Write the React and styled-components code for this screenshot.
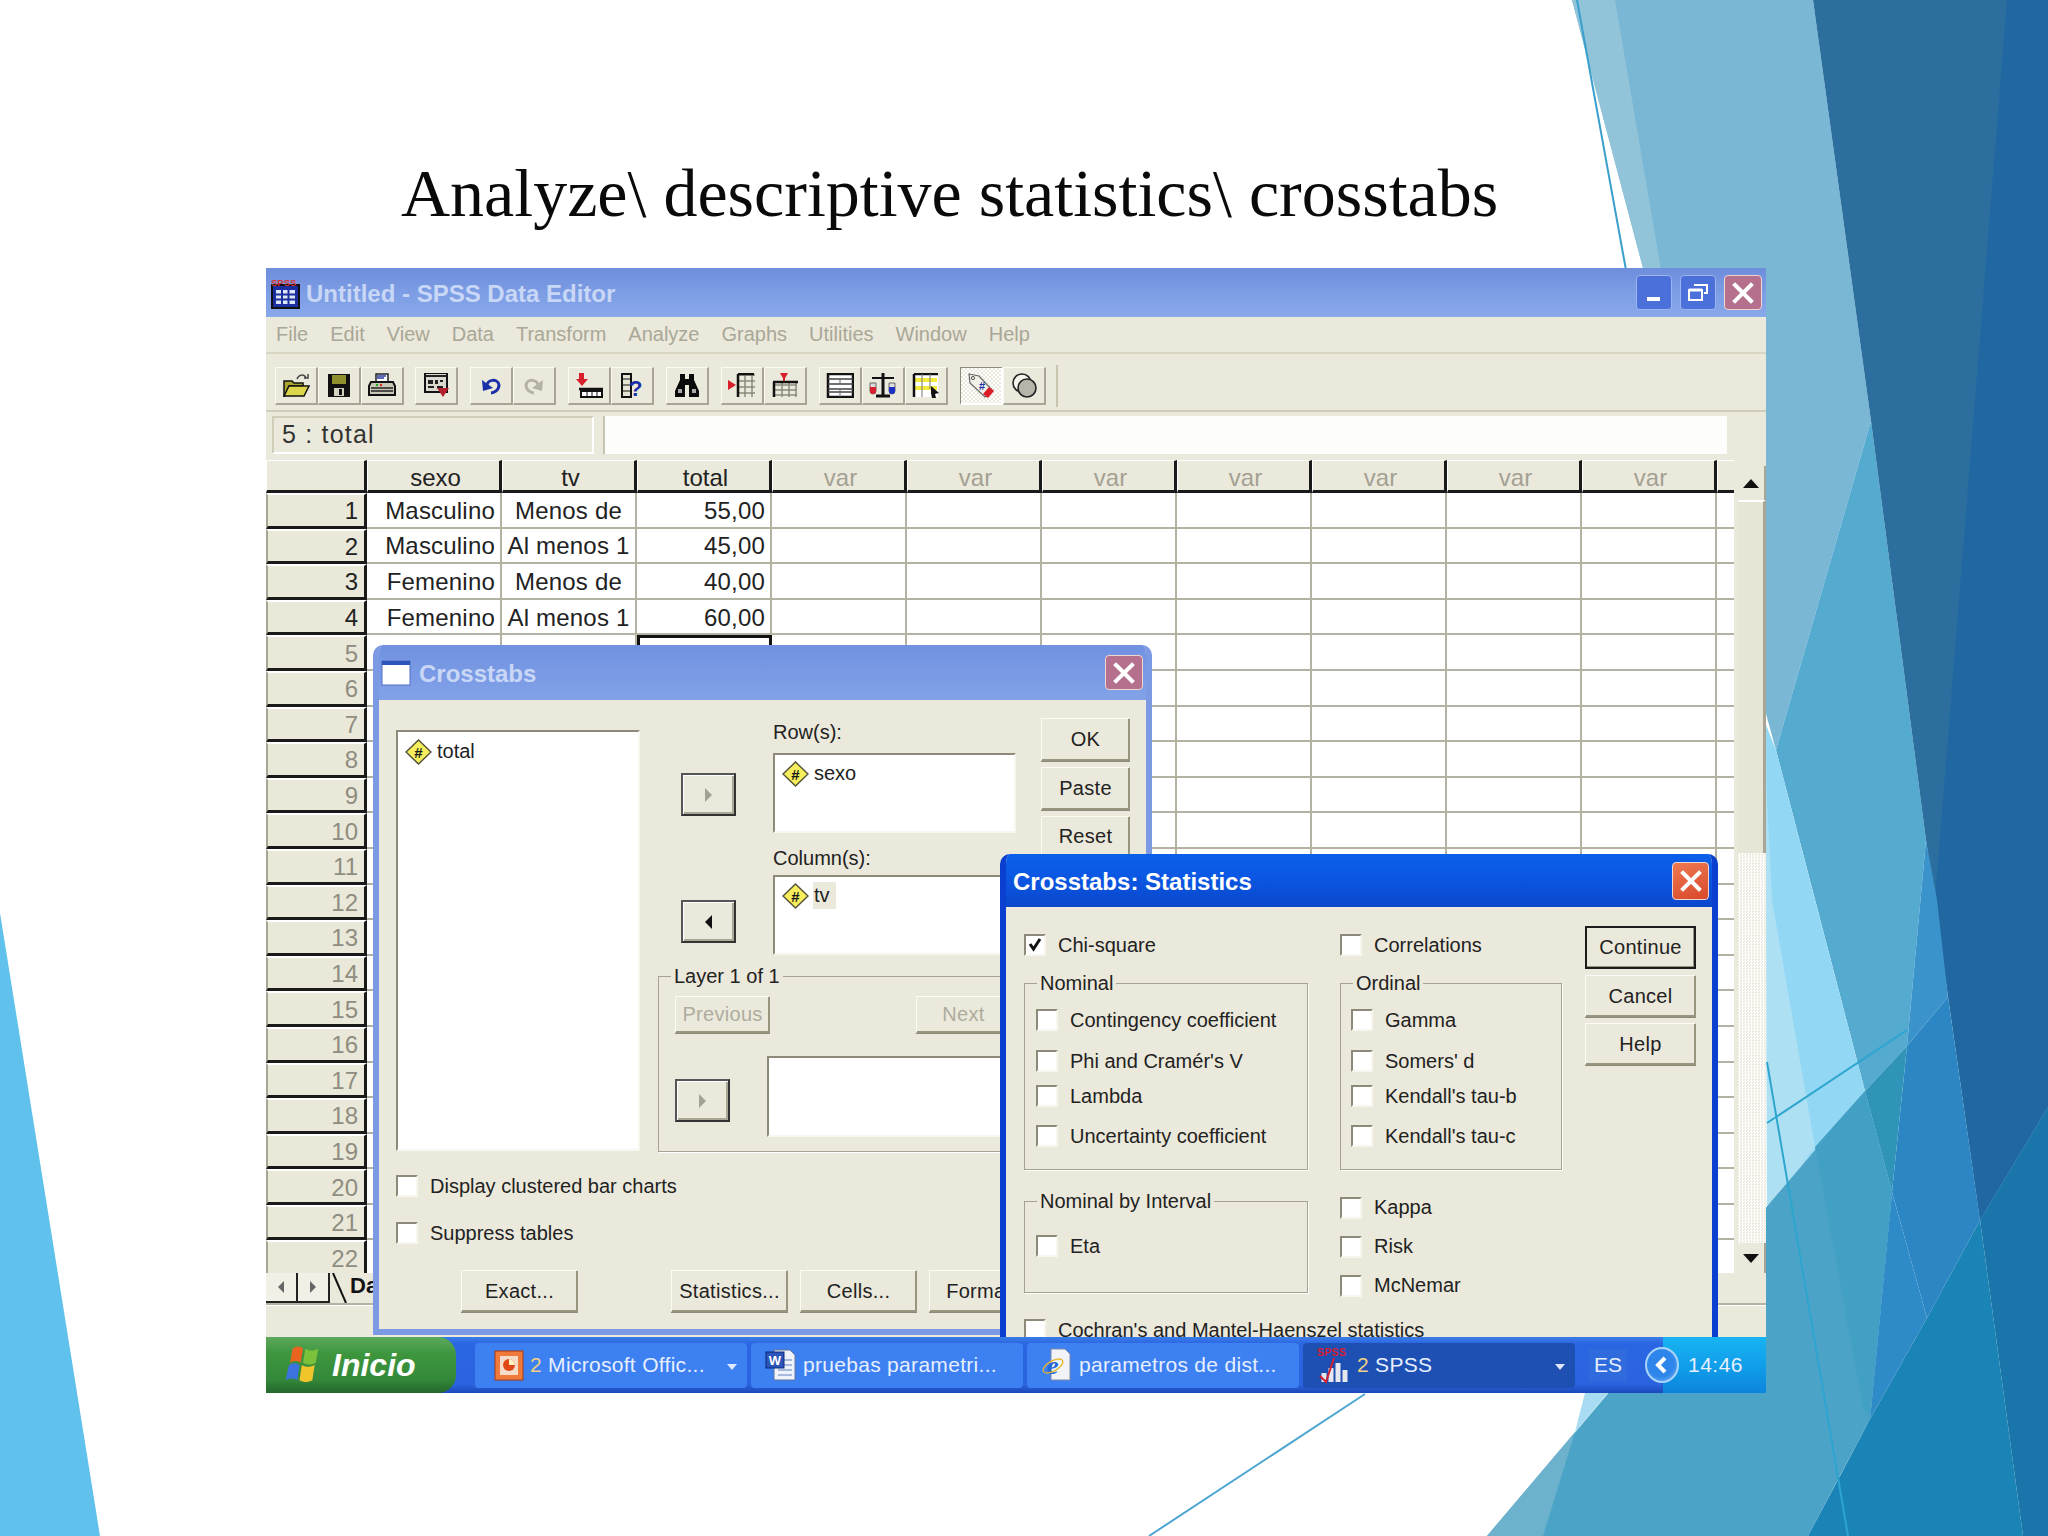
import React from "react";
import styled, { createGlobalStyle } from "styled-components";

const GlobalStyle = createGlobalStyle`
  html, body { margin: 0; padding: 0; background: #fff; }
  * { box-sizing: border-box; }
`;

const FACE = "#ebe9db";
const SHADE = "#98957f";

const Page = styled.div`
  position: relative;
  width: 2048px;
  height: 1536px;
  overflow: hidden;
  background: #fff;
  font-family: "Liberation Sans", Arial, sans-serif;
`;

const Backdrop = styled.svg`
  position: absolute;
  inset: 0;
`;

const Slide = styled.div`
  position: relative;
  display: flex;
  flex-direction: column;
`;

const Heading = styled.h1`
  flex: 0 0 268px;
  margin: 0;
  padding: 155px 0 0 401px;
  font: 400 68px/76px "Liberation Serif", "Times New Roman", serif;
  color: #0a0a0a;
  white-space: nowrap;
`;

const AppWindow = styled.div`
  position: relative;
  display: flex;
  flex-direction: column;
  margin-left: 266px;
  width: 1500px;
  height: 1125px;
  background: ${FACE};
`;

const TitleBar = styled.div`
  flex: 0 0 49px;
  display: flex;
  align-items: center;
  padding: 0 4px;
  background: linear-gradient(180deg, #6e8edc 0%, #7f9fe6 60%, #8aa9ea 100%);
  color: #c9d7f6;
  font-size: 24px;
  font-weight: 700;
`;

const TitleText = styled.span`
  margin-left: ${(p) => p.$left ?? 5}px;
  padding-top: 2px;
  flex: 1;
`;

const WinButtons = styled.div`
  display: flex;
  gap: 8px;
`;

const WinButton = styled.div`
  display: flex;
  align-items: center;
  justify-content: center;
  width: ${(p) => p.$w || 36}px;
  height: ${(p) => p.$h || 35}px;
  border: 1px solid ${(p) => (p.$red ? "#f1d6d0" : "#9db4ee")};
  border-radius: 4px;
  background: ${(p) => p.$bg};
`;

const MenuBar = styled.div`
  flex: 0 0 35px;
  display: flex;
  align-items: center;
  gap: 22px;
  padding: 0 0 0 10px;
  font-size: 20px;
  color: #a9a797;
`;

const ToolBar = styled.div`
  flex: 0 0 60px;
  display: flex;
  align-items: flex-start;
  padding: 13px 0 0 9px;
  border-top: 2px solid #d9d6c4;
  border-bottom: 2px solid #cfccb9;
`;

const ToolGroup = styled.div`
  display: flex;
  margin-right: ${(p) => p.$gap || 12}px;
`;

const ToolButton = styled.div`
  display: flex;
  align-items: center;
  justify-content: center;
  width: 43px;
  height: 38px;
  border: 1px solid;
  border-color: #fbfaf3 #a8a594 #a8a594 #fbfaf3;
  border-width: 1px 2px 2px 1px;
  background: ${(p) =>
    p.$on
      ? "repeating-conic-gradient(#fff 0 25%, #ebe9db 0 50%) 0 0 / 4px 4px"
      : FACE};
  ${(p) => p.$on && "border-color: #8d8a7a #fff #fff #8d8a7a;"}
`;

const ToolEnd = styled.div`
  width: 2px;
  height: 42px;
  margin-top: -2px;
  background: #c7c4b0;
`;

const RefBar = styled.div`
  flex: 0 0 48px;
  display: flex;
  padding: 4px 0 0 6px;
`;

const RefBox = styled.div`
  width: 322px;
  height: 38px;
  padding-left: 8px;
  border: 2px solid;
  border-color: #d0cdb9 #fff #fff #d0cdb9;
  font-size: 25px;
  letter-spacing: 1.2px;
  line-height: 33px;
  color: #333;
`;

const RefInput = styled.div`
  width: 1124px;
  height: 38px;
  margin-left: 9px;
  background: #fdfdfb;
  border-left: 2px solid #c7c4b0;
`;

const SheetArea = styled.div`
  flex: 0 0 813px;
  display: flex;
`;

const SheetGrid = styled.div`
  width: 1468px;
  height: 813px;
  overflow: hidden;
  display: grid;
  grid-template-columns: 101px repeat(10, 135px) 17px;
  grid-template-rows: 33px;
  grid-auto-rows: 35.6px;
  background: #fff;
`;

const HeadCell = styled.div`
  display: flex;
  align-items: center;
  justify-content: center;
  padding: 5px 0 0 4px;
  border-top: 1px solid #fff;
  border-left: 1px solid #fff;
  border-right: ${(p) => (p.$plain ? "0" : "3px solid #1a1a1a")};
  border-bottom: 3px solid #1a1a1a;
  background: ${FACE};
  font-size: 24px;
  line-height: 1;
  color: ${(p) => (p.$muted ? "#a3a193" : "#222")};
`;

const RowHead = styled.div`
  display: flex;
  align-items: center;
  justify-content: flex-end;
  padding: 2px 6px 0 0;
  border-top: 2px solid #fff;
  border-left: 2px solid #a8a594;
  border-right: 3px solid #1a1a1a;
  border-bottom: 3px solid #1a1a1a;
  background: #e9e8d9;
  font-size: 24px;
  color: ${(p) => (p.$muted ? "#8f8d7f" : "#222")};
`;

const Cell = styled.div`
  display: flex;
  align-items: center;
  justify-content: ${(p) => p.$align || "flex-end"};
  padding: 2px ${(p) => (p.$align === "center" ? 0 : 5)}px 0 0;
  border-right: ${(p) => (p.$plain ? "0" : "2px solid #b4b2a2")};
  border-bottom: 2px solid #b4b2a2;
  background: #fff;
  font-size: 24px;
  letter-spacing: 0.2px;
  color: #222;
  ${(p) => p.$current && "outline: 3px solid #111; outline-offset: -3px;"}
`;

const ScrollBar = styled.div`
  width: 28px;
  margin: 6px 0 0 4px;
  display: flex;
  flex-direction: column;
`;

const ScrollEnd = styled.div`
  flex: 0 0 ${(p) => p.$h}px;
  display: flex;
  align-items: center;
  justify-content: center;
  border-right: 2px solid #a8a594;
  background: ${FACE};
`;

const ScrollThumb = styled.div`
  flex: 0 0 353px;
  background: #e7e6d6;
  border-top: 2px solid #fff;
  border-right: 3px solid #a8a594;
`;

const ScrollTrack = styled.div`
  flex: 1;
  background: repeating-conic-gradient(#fff 0 25%, #ebe9db 0 50%) 0 0 / 3px 3px;
`;

const TabStrip = styled.div`
  flex: 0 0 31px;
  display: flex;
  border-bottom: 2px solid #b4b2a2;
  box-shadow: 0 1px 0 #fff;
`;

const TabNav = styled.div`
  display: flex;
  align-items: center;
  justify-content: center;
  width: 32px;
  border-right: 2px solid #222;
  border-bottom: 2px solid #222;
  background: #f1f0e6;
`;

const SheetTab = styled.div`
  display: flex;
  align-items: flex-start;
  gap: 2px;
  padding-left: 2px;
  font-size: 22px;
  font-weight: 700;
  line-height: 26px;
  color: #111;
`;

const TaskBar = styled.div`
  position: absolute;
  left: 0;
  right: 0;
  bottom: 0;
  height: 56px;
  display: flex;
  align-items: center;
  background: linear-gradient(180deg, #3a7de6 0%, #2b66e2 12%, #2a63de 85%, #1c48b8 100%);
  font-size: 21px;
  color: #e7efff;
`;

const StartButton = styled.div`
  flex: 0 0 190px;
  height: 56px;
  display: flex;
  align-items: center;
  gap: 8px;
  padding-left: 16px;
  border-radius: 0 18px 18px 0;
  background: linear-gradient(180deg, #5da85d 0%, #3d963d 30%, #34893a 75%, #24682c 100%);
  font-size: 32px;
  font-weight: 700;
  font-style: italic;
  color: #fff;
`;

const Task = styled.div`
  flex: 0 0 272px;
  height: 45px;
  margin-left: ${(p) => p.$gap}px;
  display: flex;
  align-items: center;
  gap: 6px;
  padding-left: ${(p) => p.$pad || 14}px;
  border-radius: 4px;
  background: ${(p) => (p.$active ? "#1e50b4" : "#3c80f2")};
  letter-spacing: 0.3px;
  white-space: nowrap;
`;

const TaskCount = styled.span`
  color: #f2d184;
`;

const Caret = styled.span`
  margin: 4px 10px 0 auto;
  width: 0;
  height: 0;
  border: 5px solid transparent;
  border-top: 6px solid #dfe8ff;
  border-bottom: 0;
`;

const Lang = styled.div`
  margin-left: 14px;
  padding: 4px 5px;
  background: #2f6bdc;
`;

const Tray = styled.div`
  position: relative;
  margin-left: auto;
  flex: 0 0 103px;
  height: 56px;
  padding: 15px 0 0 25px;
  background: linear-gradient(180deg, #18b4f2 0%, #0f9ae8 60%, #0d84dc 100%);
  letter-spacing: 0.5px;
  line-height: 26px;
`;

const TrayChevron = styled.div`
  position: absolute;
  left: -18px;
  top: 10px;
  width: 34px;
  height: 36px;
  display: flex;
  align-items: center;
  justify-content: center;
  border-radius: 50%;
  border: 2px solid #a8d4fa;
  background: radial-gradient(circle at 45% 45%, #2f86ea 0 55%, #7fbcf6 100%);
`;

const Dialog = styled.div`
  position: absolute;
  left: ${(p) => p.$left}px;
  top: ${(p) => p.$top}px;
  width: ${(p) => p.$w}px;
  height: ${(p) => p.$h}px;
  display: flex;
  flex-direction: column;
  overflow: hidden;
  border: 6px solid ${(p) => (p.$active ? "#0b3fd0" : "#7c9ae4")};
  border-top: 0;
  ${(p) => p.$active && "border-bottom: 0;"}
  border-radius: 10px 10px 0 0;
  background: ${FACE};
  font-size: 20px;
  color: #222;
`;

const DialogTitle = styled.div`
  flex: 0 0 ${(p) => p.$h}px;
  margin: 0 -6px;
  display: flex;
  align-items: center;
  padding: 0 ${(p) => p.$pad}px 0 ${(p) => p.$padL}px;
  font-size: 24px;
  font-weight: 700;
  color: ${(p) => (p.$active ? "#fff" : "#c9d7f6")};
  background: ${(p) =>
    p.$active
      ? "linear-gradient(180deg, #0a5fe8 0%, #0b58e4 40%, #0a47cc 100%)"
      : "linear-gradient(180deg, #7091e0 0%, #82a2e8 100%)"};
`;

const DialogBody = styled.div`
  flex: 1;
  min-height: 0;
  display: flex;
  flex-direction: column;
  padding: 18px 0 0 17px;
`;

const StatsBody = styled.div`
  flex: 1;
  min-height: 0;
  display: grid;
  grid-template-columns: 284px 222px 111px;
  column-gap: 32px;
  align-items: start;
  padding: 18px 0 0 18px;
`;

const Column = styled.div`
  display: flex;
  flex-direction: column;
`;

const TopArea = styled.div`
  flex: 0 0 434px;
  display: flex;
`;

const sunken = `
  background: #fff;
  border: 2px solid;
  border-color: #8d8a7a #f7f6ef #f7f6ef #8d8a7a;
`;

const VarList = styled.div`
  ${sunken}
  width: 244px;
  height: 421px;
  margin-top: 12px;
  padding: 6px 0 0 7px;
`;

const VarItem = styled.div`
  display: flex;
  align-items: center;
  gap: 4px;
`;

const VarName = styled.span`
  padding: 2px 6px 2px 1px;
  background: ${(p) => (p.$picked ? "#ebe9db" : "transparent")};
`;

const MiddleColumn = styled.div`
  width: 365px;
  margin-left: 18px;
  display: flex;
  flex-direction: column;
`;

const PickRow = styled.div`
  display: flex;
  margin-top: ${(p) => p.$top || 0}px;
`;

const ArrowButton = styled.div`
  flex: 0 0 55px;
  height: 43px;
  margin: ${(p) => p.$top}px 0 0 ${(p) => p.$left}px;
  display: flex;
  align-items: center;
  justify-content: center;
  border: 2px solid #333;
  border-color: #555 #333 #333 #555;
  box-shadow: inset 1px 1px 0 #fff, inset -2px -2px 0 #aaa795;
  background: ${FACE};
`;

const PickColumn = styled.div`
  margin-left: 37px;
  width: 243px;
  display: flex;
  flex-direction: column;
`;

const PickLabel = styled.div`
  height: ${(p) => p.$h}px;
  display: flex;
  align-items: flex-end;
  padding-bottom: ${(p) => p.$under}px;
  line-height: 24px;
`;

const PickBox = styled.div`
  ${sunken}
  height: 80px;
  padding: 5px 0 0 7px;
`;

const Group = styled.fieldset`
  margin: ${(p) => p.$top || 0}px 0 0;
  height: ${(p) => p.$h}px;
  padding: 0;
  border: 1px solid #a5a292;
  box-shadow: 1px 1px 0 #fff;
  min-width: 0;
`;

const GroupTitle = styled.legend`
  margin-left: 12px;
  padding: 0 3px;
  line-height: 24px;
  font-size: 20px;
`;

const GroupContent = styled.div`
  padding: ${(p) => p.$top}px 0 0 ${(p) => p.$left}px;
`;

const LayerRow = styled.div`
  display: flex;
  justify-content: ${(p) => p.$justify || "flex-start"};
  margin-top: ${(p) => p.$top || 0}px;
  padding-right: ${(p) => p.$right || 0}px;
`;

const LayerBox = styled.div`
  ${sunken}
  width: 245px;
  height: 81px;
  margin-left: 37px;
`;

const Button = styled.div`
  display: flex;
  align-items: center;
  justify-content: center;
  flex: 0 0 auto;
  width: ${(p) => p.$w}px;
  height: ${(p) => p.$h}px;
  background: ${FACE};
  border: 1px solid;
  border-color: #fbfaf3 ${SHADE} ${SHADE} #fbfaf3;
  box-shadow: inset -1px -1px 0 ${SHADE}, 0 1px 0 #8d8a7a;
  letter-spacing: 0.3px;
  color: ${(p) => (p.$off ? "#aeac9e" : "#222")};
  ${(p) =>
    p.$default &&
    "border: 2px solid #1c1c1c; box-shadow: inset -1px -1px 0 #98957f;"}
`;

const SideButtons = styled.div`
  width: 89px;
  margin-left: 18px;
  display: flex;
  flex-direction: column;
  gap: 6px;
`;

const StatsButtons = styled.div`
  display: flex;
  flex-direction: column;
  margin-top: 1px;
  margin-left: -9px;
  gap: 6px;
`;

const CheckRow = styled.div`
  display: flex;
  align-items: center;
  gap: 12px;
  height: ${(p) => p.$h || 40}px;
  margin-top: ${(p) => p.$top || 0}px;
  white-space: nowrap;
`;

const CheckBox = styled.div`
  flex: 0 0 22px;
  height: 22px;
  display: flex;
  align-items: center;
  justify-content: center;
  background: #fff;
  border: 2px solid;
  border-color: #8d8a7a #f7f6ef #f7f6ef #8d8a7a;
`;

const BottomRow = styled.div`
  display: flex;
  gap: 12px;
  margin-top: 17px;
  padding-left: 65px;
`;

const PushedButton = styled(Button)`
  margin-left: 81px;
`;

const COLUMNS = ["sexo", "tv", "total", "var", "var", "var", "var", "var", "var", "var"];
const DATA = [
  ["Masculino", "Menos de", "55,00"],
  ["Masculino", "Al menos 1", "45,00"],
  ["Femenino", "Menos de", "40,00"],
  ["Femenino", "Al menos 1", "60,00"],
];
const ROWS = Array.from({ length: 22 }, (_, i) => i + 1);

const NOMINAL = [
  ["Contingency coefficient", 0],
  ["Phi and Cramér's V", 11],
  ["Lambda", 5],
  ["Uncertainty coefficient", 10],
];
const ORDINAL = [
  ["Gamma", 0],
  ["Somers' d", 11],
  ["Kendall's tau-b", 5],
  ["Kendall's tau-c", 10],
];

function Triangle({ dir = "right", color = "#111", size = 7 }) {
  const d = {
    right: `M0 0L${size} ${size}L0 ${size * 2}Z`,
    left: `M${size} 0L0 ${size}L${size} ${size * 2}Z`,
  }[dir];
  return (
    <svg width={size} height={size * 2} viewBox={`0 0 ${size} ${size * 2}`}>
      <path d={d} fill={color} />
    </svg>
  );
}

function VertCaret({ up }) {
  return (
    <svg width="16" height="9" viewBox="0 0 16 9">
      <path d={up ? "M0 9L8 0L16 9Z" : "M0 0L8 9L16 0Z"} fill="#111" />
    </svg>
  );
}

function XGlyph({ size = 22, color = "#fff" }) {
  return (
    <svg width={size} height={size} viewBox="0 0 22 22">
      <path d="M3 3L19 19M19 3L3 19" stroke={color} strokeWidth="4" strokeLinecap="square" />
    </svg>
  );
}

function VarIcon() {
  return (
    <svg width="27" height="26" viewBox="0 0 27 26">
      <path d="M13.5 1L26 13L13.5 25L1 13Z" fill="#f6ee5c" stroke="#55533a" strokeWidth="1.5" />
      <text x="13.5" y="18.5" textAnchor="middle" fontFamily="Liberation Sans" fontSize="15" fontWeight="700" fill="#1a1a1a">#</text>
    </svg>
  );
}

function Tick() {
  return (
    <svg width="16" height="16" viewBox="0 0 16 16">
      <path d="M3 7L6.5 12L13 2" fill="none" stroke="#111" strokeWidth="3" />
    </svg>
  );
}

function AppIcon() {
  return (
    <svg width="31" height="32" viewBox="0 0 31 32">
      <rect x="2" y="8" width="27" height="23" fill="#1c2f9e" stroke="#111" strokeWidth="2" />
      <path d="M6 13h19v14H6z" fill="#dfe6f7" />
      <path d="M6 17.5h19M6 22.5h19M12 13v14M18.5 13v14" stroke="#1c2f9e" strokeWidth="2" />
      <text x="1" y="9" fontFamily="Liberation Sans" fontSize="9.5" fontWeight="700" fill="#d63232">SPSS</text>
    </svg>
  );
}

const ti = { width: 28, height: 25, viewBox: "0 0 28 25" };

const TOOLS = [
  [
    <svg {...ti}><path d="M2 8h8l2 2h9v3H7L3 23H2Z" fill="#a8a52e" stroke="#111" strokeWidth="1.5" /><path d="M7 13h20l-5 10H2Z" fill="#dcd64a" stroke="#111" strokeWidth="1.5" /><path d="M15 6C17 1 22 1 24 5" fill="none" stroke="#444" strokeWidth="1.5" /><path d="M22 5h4V1" fill="none" stroke="#444" strokeWidth="1.5" /></svg>,
    <svg {...ti}><path d="M3 1h22v23H3Z" fill="#111" /><path d="M7 2h14v9H7Z" fill="#8f8f2e" /><path d="M9 15h10v8H9Z" fill="#d4d2c0" /><path d="M14 16h3v6h-3Z" fill="#111" /></svg>,
    <svg {...ti}><path d="M8 1h12v8H8Z" fill="#fff" stroke="#222" strokeWidth="1.5" /><path d="M9 3h9M9 5h7" stroke="#2c3da0" strokeWidth="1.5" /><path d="M3 9h22l2 4v9H1v-9Z" fill="#c9c7b6" stroke="#111" strokeWidth="2" /><path d="M3 15h22M3 18h22" stroke="#222" strokeWidth="1.5" /><circle cx="9" cy="12" r="1.2" fill="#2a2" /><circle cx="13" cy="12" r="1.2" fill="#d22" /></svg>,
  ],
  [
    <svg {...ti}><path d="M3 0h22v19H3Z" fill="#dcdad0" stroke="#111" strokeWidth="2" /><path d="M3 3h22" stroke="#222" strokeWidth="2" /><path d="M6 7h5v4H6ZM13 7h3v4h-3ZM18 7h3v2h-3ZM6 13h6v2H6ZM15 13h6v2h-6Z" fill="#222" /><path d="M15 15h12l-6 9Z" fill="#b3202c" /></svg>,
  ],
  [
    <svg {...ti}><path d="M10 14C9 6 21 5 22 12C22 17 17 20 14 20" fill="none" stroke="#1b2fa8" strokeWidth="3" /><path d="M5 7l1 11 10-3Z" fill="#1b2fa8" /></svg>,
    <svg {...ti}><path d="M18 14C19 6 7 5 6 12C6 17 11 20 14 20" fill="none" stroke="#b4b2a4" strokeWidth="3" /><path d="M23 7l-1 11-10-3Z" fill="#b4b2a4" /></svg>,
  ],
  [
    <svg {...ti}><path d="M4 0h5v6h4l-6 7-6-7h3Z" fill="#d8202c" /><path d="M4 16h24" stroke="#111" strokeWidth="2.5" /><path d="M6 18h21v6H6Z" fill="#fff" stroke="#111" strokeWidth="2" /><path d="M12 18v6M17 18v6M22 18v6" stroke="#111" /></svg>,
    <svg {...ti}><path d="M4 1h9v23H4Z" fill="#e6e4d6" stroke="#111" strokeWidth="2" /><path d="M5 6h7M5 12h7M5 18h7" stroke="#111" /><text x="11" y="23" fontFamily="Liberation Sans" fontSize="22" fontWeight="700" fill="#1b2fa8">?</text></svg>,
  ],
  [
    <svg {...ti}><path d="M7 1h5v5h4V1h5v6l5 11v6h-10V12h-4v12H2v-6l5-11Z" fill="#0a0a0a" /><path d="M5 16h4v4H5ZM19 16h4v4h-4Z" fill="#aaa" /></svg>,
  ],
  [
    <svg {...ti}><path d="M10 2h17M10 8h17M10 14h17M10 20h17M10 2v22M17 2v22M24 2v22" stroke="#8c8a7c" strokeWidth="1.5" /><path d="M10 1h16M10 1v23" stroke="#111" strokeWidth="2.5" /><path d="M0 7l8 5-8 5Z" fill="#d8202c" /><path d="M0 11h4v2H0Z" fill="#d8202c" /></svg>,
    <svg {...ti}><path d="M4 12h22M4 17h22M4 22h22M11 9v15M18 9v15M25 9v15" stroke="#8c8a7c" strokeWidth="1.5" /><path d="M2 9h25M3 9v15" stroke="#111" strokeWidth="2.5" /><path d="M9 0h8l-4 7Z" fill="#d8202c" /><path d="M12 0h2v8h-2Z" fill="#d8202c" /></svg>,
  ],
  [
    <svg {...ti}><path d="M2 1h25v23H2Z" fill="#fff" stroke="#111" strokeWidth="2.5" /><path d="M2 6h25M2 11h25M2 16h25M2 19h25" stroke="#444" strokeWidth="1.5" /><path d="M14 6v5M14 16v8" stroke="#666" /></svg>,
    <svg {...ti}><path d="M14 0v23M7 23h14" stroke="#111" strokeWidth="3" /><path d="M3 5h22" stroke="#111" strokeWidth="2" /><path d="M1 10h6v8a3 3 0 0 1-6 0Z" fill="#ddd" stroke="#666" /><path d="M1 14h6v4a3 3 0 0 1-6 0Z" fill="#d8202c" /><path d="M20 10h6v8a3 3 0 0 1-6 0Z" fill="#ddd" stroke="#666" /><path d="M20 14h6v4a3 3 0 0 1-6 0Z" fill="#1b2fc8" /></svg>,
    <svg {...ti}><path d="M2 1h24v23H2Z" fill="#fff" /><path d="M3 5h22v4H3ZM3 13h22v4H3Z" fill="#f2ea3c" /><path d="M2 1h24M2 1v23" stroke="#111" strokeWidth="2.5" /><path d="M10 1v23M18 1v15" stroke="#777" /><path d="M19 13l8 7-4 1 1 4h-4l-1-5Z" fill="#111" /></svg>,
  ],
];

function LabelsIcon() {
  return (
    <svg {...ti}>
      <path d="M2 1L12 3L26 18L18 24L3 10Z" fill="#f2f1e8" stroke="#666" strokeWidth="1.2" />
      <circle cx="6" cy="5" r="1.6" fill="none" stroke="#555" />
      <path d="M22 14l5 4-6 7-5-4Z" fill="#dd1c28" />
      <text x="12" y="17" fontFamily="Liberation Sans" fontSize="11" fontWeight="700" fill="#1b2fa8">#</text>
    </svg>
  );
}

function SetsIcon() {
  return (
    <svg {...ti}>
      <ellipse cx="12" cy="10" rx="9" ry="9" fill="#f5f5ee" stroke="#222" strokeWidth="1.6" />
      <ellipse cx="17" cy="15" rx="9" ry="9" fill="#b7b5aa" stroke="#222" strokeWidth="1.6" />
    </svg>
  );
}

function FlagIcon() {
  return (
    <svg width="42" height="40" viewBox="0 0 36 34">
      <path d="M9 3C13 0 16 1 18 3L16 15C13 13 10 13 7 15Z" fill="#e9641e" />
      <path d="M20 3C23 5 27 5 31 3L29 15C26 17 21 17 18 15Z" fill="#7cc13a" />
      <path d="M6 17C9 15 12 15 15 17L13 30C10 28 6 28 3 30Z" fill="#3c72e0" />
      <path d="M17 17C20 19 24 19 28 17L26 30C22 32 19 32 15 30Z" fill="#f0c52c" />
    </svg>
  );
}

function PptIcon() {
  return (
    <svg width="30" height="32" viewBox="0 0 30 32">
      <rect x="1" y="2" width="28" height="29" fill="#ef7a3c" stroke="#a83a10" />
      <rect x="6" y="7" width="18" height="19" fill="#f6dcc8" />
      <circle cx="15" cy="16" r="6" fill="#e04818" />
      <path d="M15 16V10a6 6 0 0 1 6 6Z" fill="#fff2c4" />
    </svg>
  );
}

function WordIcon() {
  return (
    <svg width="32" height="34" viewBox="0 0 32 34">
      <path d="M9 2h16l5 5v25H9Z" fill="#eef2fb" stroke="#60739c" />
      <path d="M13 12h14M13 17h14M13 22h14M13 27h14" stroke="#8fa5d2" strokeWidth="1.5" />
      <rect x="1" y="4" width="18" height="16" fill="#2b55b8" stroke="#0d2a78" />
      <text x="10" y="17" textAnchor="middle" fontFamily="Liberation Sans" fontSize="13" fontWeight="700" fill="#fff">W</text>
    </svg>
  );
}

function IeIcon() {
  return (
    <svg width="32" height="34" viewBox="0 0 32 34">
      <path d="M10 1h14l5 5v26H10Z" fill="#f1f3f8" stroke="#7d8aa5" />
      <text x="12" y="26" textAnchor="middle" fontFamily="Liberation Serif" fontSize="26" fontStyle="italic" fontWeight="700" fill="#2468d8">e</text>
      <ellipse cx="12" cy="18" rx="11" ry="5" fill="none" stroke="#e8b52a" strokeWidth="1.3" transform="rotate(-30 12 18)" />
    </svg>
  );
}

function SpssChartIcon() {
  return (
    <svg width="34" height="38" viewBox="0 0 34 38">
      <text x="0" y="10" fontFamily="Liberation Sans" fontSize="10.5" fontWeight="700" fill="#d22030">SPSS</text>
      <path d="M7 36V27M14 36V22M21 36V17M28 36V24" stroke="#e6e8f0" strokeWidth="5" />
      <path d="M3 30L9 36L17 12" fill="none" stroke="#d22030" strokeWidth="2" />
    </svg>
  );
}

function BackdropShapes() {
  return (
    <Backdrop width="2048" height="1536" viewBox="0 0 2048 1536">
      <polygon points="0,913 100,1536 0,1536" fill="#5fc1ec" />
      <polygon points="1572,0 1813,0 1871,421 1776,750 1643,268" fill="#79b7d5" />
      <polygon points="1572,0 1615,0 1661,270 1643,268" fill="#92c4d9" />
      <polygon points="1776,750 1871,421 1926,840 1907,1046 1865,1091" fill="#54aacf" />
      <polygon points="1766,725 1776,750 1815,900 1865,1091 1767,1206" fill="#92d7f4" />
      <polygon points="1766,780 1772,900 1815,1147 1788,1182 1767,1206" fill="#aee0f4" />
      <polygon points="1813,0 2048,0 2048,1107 1980,1220 1948,997 1926,840 1871,421" fill="#2c6f9f" />
      <polygon points="2007,0 2048,0 2048,1107 1980,1220 1935,900" fill="#2168a2" />
      <polygon points="1926,840 1937,900 1948,997 1907,1046" fill="#3b93cb" />
      <polygon points="1948,997 1980,1220 1927,1318 1892,1192 1907,1046" fill="#2b86c3" />
      <polygon points="1865,1091 1907,1046 1892,1192" fill="#2f94b8" />
      <polygon points="1487,1536 1865,1091 1892,1192 1870,1419 1808,1536" fill="#4ba3c7" />
      <polygon points="1815,1147 1865,1091 1892,1192 1870,1419 1863,1407" fill="#42a0c4" />
      <polygon points="1892,1192 1927,1318 1870,1419" fill="#2f8bc8" />
      <polygon points="1585,1393 1608,1393 1575,1432" fill="#a8dcf2" />
      <polygon points="1487,1536 1575,1432 1543,1536" fill="#6db2cd" />
      <polygon points="1980,1220 2023,1536 1808,1536 1840,1476 1870,1419 1927,1318" fill="#1b84b6" />
      <polygon points="2048,1107 1980,1220 2023,1536 2048,1536" fill="#1a76aa" />
      <line x1="1577" y1="0" x2="1626" y2="270" stroke="#3a9fcc" strokeWidth="2" />
      <line x1="1767" y1="1062" x2="1848" y2="1536" stroke="#2da5cf" strokeWidth="2" />
      <line x1="1767" y1="1123" x2="1907" y2="1030" stroke="#2da5cf" strokeWidth="2" />
      <line x1="1149" y1="1536" x2="1365" y2="1394" stroke="#4ca6d0" strokeWidth="2" />
    </Backdrop>
  );
}

function Check({ label, checked, top, h }) {
  return (
    <CheckRow $top={top} $h={h}>
      <CheckBox>{checked && <Tick />}</CheckBox>
      <span>{label}</span>
    </CheckRow>
  );
}

function CrosstabsDialog() {
  return (
    <Dialog $left={107} $top={377} $w={779} $h={690}>
      <DialogTitle $h={55} $pad={9} $padL={8}>
        <svg width="30" height="26" viewBox="0 0 30 26">
          <rect x="1" y="1" width="28" height="24" fill="#fff" stroke="#4f6fc4" />
          <rect x="1" y="1" width="28" height="4" fill="#2b55b8" />
        </svg>
        <TitleText $left={8}>Crosstabs</TitleText>
        <WinButton $w={38} $h={35} $red $bg="#b5708e">
          <XGlyph />
        </WinButton>
      </DialogTitle>
      <DialogBody>
        <TopArea>
          <VarList>
            <VarItem>
              <VarIcon />
              <VarName>total</VarName>
            </VarItem>
          </VarList>
          <MiddleColumn>
            <PickRow>
              <ArrowButton $top={55} $left={23}>
                <Triangle color="#a3a193" />
              </ArrowButton>
              <PickColumn>
                <PickLabel $h={35} $under={9}>Row(s):</PickLabel>
                <PickBox>
                  <VarItem>
                    <VarIcon />
                    <VarName>sexo</VarName>
                  </VarItem>
                </PickBox>
              </PickColumn>
            </PickRow>
            <PickRow $top={8}>
              <ArrowButton $top={59} $left={23}>
                <Triangle dir="left" />
              </ArrowButton>
              <PickColumn>
                <PickLabel $h={34} $under={5}>Column(s):</PickLabel>
                <PickBox>
                  <VarItem>
                    <VarIcon />
                    <VarName $picked>tv</VarName>
                  </VarItem>
                </PickBox>
              </PickColumn>
            </PickRow>
            <Group $top={9} $h={188}>
              <GroupTitle>Layer 1 of 1</GroupTitle>
              <GroupContent $top={8} $left={16}>
                <LayerRow $justify="space-between" $right={11}>
                  <Button $w={95} $h={37} $off>Previous</Button>
                  <Button $w={95} $h={37} $off>Next</Button>
                </LayerRow>
                <LayerRow $top={23}>
                  <ArrowButton $top={23} $left={0}>
                    <Triangle color="#a3a193" />
                  </ArrowButton>
                  <LayerBox />
                </LayerRow>
              </GroupContent>
            </Group>
          </MiddleColumn>
          <SideButtons>
            <Button $w={89} $h={43}>OK</Button>
            <Button $w={89} $h={43}>Paste</Button>
            <Button $w={89} $h={41}>Reset</Button>
          </SideButtons>
        </TopArea>
        <Check label="Display clustered bar charts" top={14} />
        <Check label="Suppress tables" top={7} />
        <BottomRow>
          <Button $w={117} $h={42}>Exact...</Button>
          <PushedButton $w={117} $h={42}>Statistics...</PushedButton>
          <Button $w={117} $h={42}>Cells...</Button>
          <Button $w={117} $h={42}>Format...</Button>
        </BottomRow>
      </DialogBody>
    </Dialog>
  );
}

function StatisticsDialog() {
  return (
    <Dialog $left={734} $top={586} $w={718} $h={483} $active>
      <DialogTitle $h={53} $active $pad={9} $padL={13}>
        <TitleText $left={0}>Crosstabs: Statistics</TitleText>
        <WinButton $w={37} $h={38} $red $bg="linear-gradient(160deg, #ee7a52, #d8482a)">
          <XGlyph />
        </WinButton>
      </DialogTitle>
      <StatsBody>
        <Column>
          <Check label="Chi-square" checked />
          <Group $top={6} $h={199}>
            <GroupTitle>Nominal</GroupTitle>
            <GroupContent $top={10} $left={11}>
              {NOMINAL.map(([label, top]) => (
                <Check key={label} label={label} top={top} h={30} />
              ))}
            </GroupContent>
          </Group>
          <Group $top={19} $h={104}>
            <GroupTitle>Nominal by Interval</GroupTitle>
            <GroupContent $top={18} $left={11}>
              <Check label="Eta" h={30} />
            </GroupContent>
          </Group>
          <Check label="Cochran's and Mantel-Haenszel statistics" top={17} />
        </Column>
        <Column>
          <Check label="Correlations" />
          <Group $top={6} $h={199}>
            <GroupTitle>Ordinal</GroupTitle>
            <GroupContent $top={10} $left={10}>
              {ORDINAL.map(([label, top]) => (
                <Check key={label} label={label} top={top} h={30} />
              ))}
            </GroupContent>
          </Group>
          <Check label="Kappa" top={18} h={39} />
          <Check label="Risk" h={39} />
          <Check label="McNemar" h={39} />
        </Column>
        <StatsButtons>
          <Button $w={111} $h={43} $default>Continue</Button>
          <Button $w={111} $h={42}>Cancel</Button>
          <Button $w={111} $h={42}>Help</Button>
        </StatsButtons>
      </StatsBody>
    </Dialog>
  );
}

export default function App() {
  return (
    <Page>
      <GlobalStyle />
      <BackdropShapes />
      <Slide>
        <Heading>Analyze\ descriptive statistics\ crosstabs</Heading>
        <AppWindow>
          <TitleBar>
            <AppIcon />
            <TitleText>Untitled - SPSS Data Editor</TitleText>
            <WinButtons>
              <WinButton $bg="#4b70da">
                <svg width="20" height="20" viewBox="0 0 20 20"><rect x="3" y="14" width="13" height="4" fill="#fff" /></svg>
              </WinButton>
              <WinButton $bg="#4b70da">
                <svg width="22" height="20" viewBox="0 0 22 20"><path d="M7 2h13v8h-3M2 7h13v10H2Z" fill="none" stroke="#fff" strokeWidth="2" /><path d="M2 7h13" stroke="#fff" strokeWidth="3" /></svg>
              </WinButton>
              <WinButton $w={38} $red $bg="#b5708e">
                <XGlyph />
              </WinButton>
            </WinButtons>
          </TitleBar>
          <MenuBar>
            {["File", "Edit", "View", "Data", "Transform", "Analyze", "Graphs", "Utilities", "Window", "Help"].map((m) => (
              <span key={m}>{m}</span>
            ))}
          </MenuBar>
          <ToolBar>
            {TOOLS.map((group, g) => (
              <ToolGroup key={g} $gap={g === 0 ? 11 : 12}>
                {group.map((icon, i) => (
                  <ToolButton key={i}>{icon}</ToolButton>
                ))}
              </ToolGroup>
            ))}
            <ToolGroup $gap={10}>
              <ToolButton $on><LabelsIcon /></ToolButton>
              <ToolButton><SetsIcon /></ToolButton>
            </ToolGroup>
            <ToolEnd />
          </ToolBar>
          <RefBar>
            <RefBox>5 : total</RefBox>
            <RefInput />
          </RefBar>
          <SheetArea>
            <SheetGrid>
              <HeadCell />
              {COLUMNS.map((c, i) => (
                <HeadCell key={i} $muted={c === "var"}>{c}</HeadCell>
              ))}
              <HeadCell $plain />
              {ROWS.map((r) => (
                <React.Fragment key={r}>
                  <RowHead $muted={r > 4}>{r}</RowHead>
                  {COLUMNS.map((_, c) => (
                    <Cell key={c} $align={c === 1 ? "center" : "flex-end"} $current={r === 5 && c === 2}>
                      {DATA[r - 1] && DATA[r - 1][c]}
                    </Cell>
                  ))}
                  <Cell $plain />
                </React.Fragment>
              ))}
            </SheetGrid>
            <ScrollBar>
              <ScrollEnd $h={34}><VertCaret up /></ScrollEnd>
              <ScrollThumb />
              <ScrollTrack />
              <ScrollEnd $h={30}><VertCaret /></ScrollEnd>
            </ScrollBar>
          </SheetArea>
          <TabStrip>
            <TabNav><Triangle dir="left" color="#666" size={6} /></TabNav>
            <TabNav><Triangle color="#666" size={6} /></TabNav>
            <SheetTab>
              <svg width="16" height="30" viewBox="0 0 16 30"><path d="M1 0L14 30" stroke="#111" strokeWidth="2" /></svg>
              <span>Data View</span>
            </SheetTab>
          </TabStrip>
          <CrosstabsDialog />
          <StatisticsDialog />
          <TaskBar>
            <StartButton>
              <FlagIcon />
              Inicio
            </StartButton>
            <Task $gap={19} $pad={19}>
              <PptIcon />
              <span><TaskCount>2</TaskCount> Microsoft Offic...</span>
              <Caret />
            </Task>
            <Task $gap={4}>
              <WordIcon />
              <span>pruebas parametri...</span>
            </Task>
            <Task $gap={4}>
              <IeIcon />
              <span>parametros de dist...</span>
            </Task>
            <Task $gap={4} $active>
              <SpssChartIcon />
              <span><TaskCount>2</TaskCount> SPSS</span>
              <Caret />
            </Task>
            <Lang>ES</Lang>
            <Tray>
              <TrayChevron>
                <svg width="14" height="18" viewBox="0 0 14 18"><path d="M10 2L3 9L10 16" fill="none" stroke="#fff" strokeWidth="4" /></svg>
              </TrayChevron>
              14:46
            </Tray>
          </TaskBar>
        </AppWindow>
      </Slide>
    </Page>
  );
}
